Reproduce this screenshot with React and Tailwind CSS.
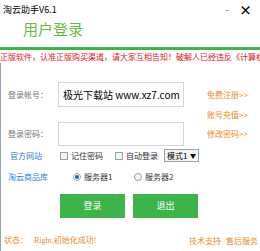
export default function App() {
  const cjk = { fontFamily: '"Noto Sans CJK SC", "Liberation Sans", sans-serif' };

  return (
    <div className="w-[260px] h-[251px] bg-white overflow-hidden flex flex-col whitespace-nowrap" style={cjk}>
      {/* 标题栏 */}
      <div className="h-[47px] flex flex-col">
        <div className="h-[18px] flex items-center justify-between pl-[3px] pr-[8px]">
          <span className="text-[9px] leading-none text-black">淘云助手V6.1</span>
          <div className="flex items-center gap-[10px]">
            <span className="text-[10px] leading-none text-gray-500">-</span>
            <span className="text-[13px] leading-none text-black font-bold">×</span>
          </div>
        </div>
        <div className="pl-[23px] pt-[3px] text-[15px] leading-none text-[#66bb44]">用户登录</div>
      </div>
      <div className="h-[3px] bg-[#3cb44a]" />

      {/* 滚动公告 */}
      <div className="h-[13px] overflow-hidden text-[8px] leading-[13px] text-[#e8101e]">
        正版软件，认准正版购买渠道，请大家互相告知！破解人已经违反《计算机软件保护条例》
      </div>

      {/* 主体 */}
      <div className="flex-1 border-l border-gray-400 flex flex-col">
        <div className="mt-[19px] h-[25px] flex items-center">
          <span className="w-[57px] shrink-0 pl-[7px] text-[8px] text-[#777]">登录帐号：</span>
          <div className="w-[126px] shrink-0 h-[25px] border border-gray-300 flex items-center pl-[4px] text-[10px] text-black overflow-hidden">
            极光下载站 www.xz7.com
          </div>
          <span className="ml-[23px] text-[8px] text-[#f08a24]">免费注册&gt;&gt;</span>
        </div>
        <div className="h-[15px] flex items-center">
          <span className="ml-[206px] text-[8px] text-[#f08a24]">账号充值&gt;&gt;</span>
        </div>
        <div className="h-[24px] flex items-center">
          <span className="w-[57px] shrink-0 pl-[7px] text-[8px] text-[#777]">登录密码：</span>
          <div className="w-[126px] shrink-0 h-[24px] border border-gray-300" />
          <span className="ml-[23px] text-[8px] text-[#f08a24]">修改密码&gt;&gt;</span>
        </div>

        <div className="mt-[3px] h-[13px] flex items-center text-[8px]">
          <span className="w-[59px] shrink-0 pl-[9px] text-[#2a7fd4]">官方网站</span>
          <span className="w-[8px] h-[8px] shrink-0 border border-gray-400 bg-gray-100" />
          <span className="ml-[3px] w-[44px] shrink-0 text-[#333]">记住密码</span>
          <span className="w-[8px] h-[8px] shrink-0 border border-gray-400 bg-gray-100" />
          <span className="ml-[3px] w-[38px] shrink-0 text-[#333]">自动登录</span>
          <div className="w-[35px] shrink-0 h-[13px] border border-gray-400 bg-gray-100 flex items-center justify-between pl-[2px] pr-[2px]">
            <span className="text-[8px] leading-none text-black">模式1</span>
            <span className="text-[6px] leading-none text-black">▼</span>
          </div>
        </div>

        <div className="mt-[8px] h-[13px] flex items-center text-[8px]">
          <span className="w-[72px] shrink-0 pl-[7px] text-[#2a7fd4]">淘云商品库</span>
          <span className="w-[8px] h-[8px] shrink-0 rounded-full border border-gray-400 bg-white flex items-center justify-center">
            <span className="w-[4px] h-[4px] rounded-full bg-[#2a5fb0]" />
          </span>
          <span className="ml-[3px] w-[50px] shrink-0 text-[#333]">服务器1</span>
          <span className="w-[8px] h-[8px] shrink-0 rounded-full border border-gray-400 bg-gray-100" />
          <span className="ml-[3px] text-[#333]">服务器2</span>
        </div>

        <div className="mt-[11px] h-[24px] flex pl-[59px] gap-[8px]">
          <div className="w-[65px] h-[24px] bg-[#3cb44a] flex items-center justify-center text-white text-[9px]">登录</div>
          <div className="w-[65px] h-[24px] bg-[#3cb44a] flex items-center justify-center text-white text-[9px]">退出</div>
        </div>

        <div className="mt-[16px] h-[13px] flex items-center justify-between pl-[3px] pr-[2px] text-[8px] text-[#f08a24]">
          <span>
            状态：
            <span className="ml-[6px]" style={{ fontFamily: '"Liberation Serif", "Noto Sans CJK SC", serif' }}>Right,</span>
            初始化成功!
          </span>
          <span className="flex gap-[5px]">
            <span>技术支持</span>
            <span>售后服务</span>
          </span>
        </div>
      </div>
    </div>
  );
}
